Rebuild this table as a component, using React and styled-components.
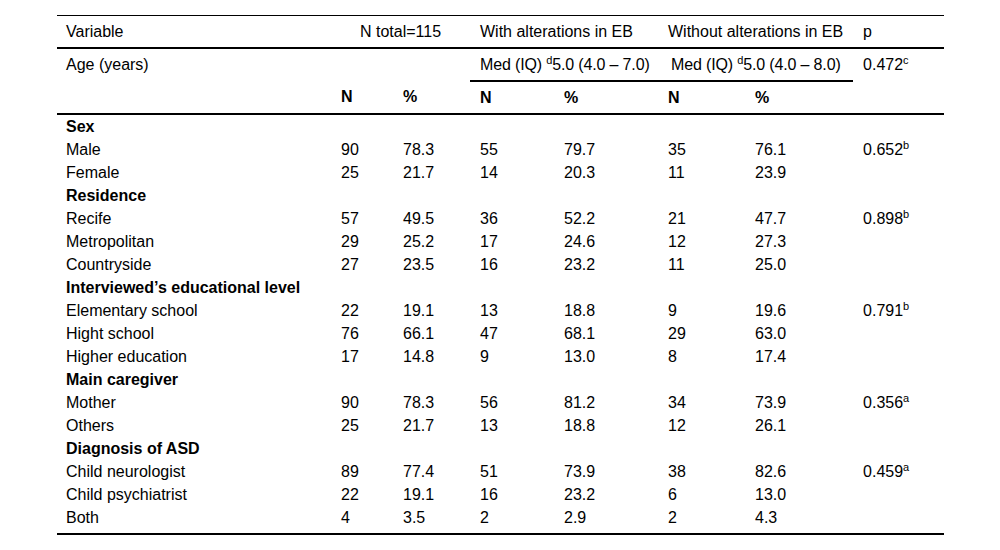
import React from 'react'
import styled, { createGlobalStyle } from 'styled-components'

const GlobalStyle = createGlobalStyle`
  html, body {
    margin: 0;
    padding: 0;
    background: #fff;
  }
  body {
    font-family: "Liberation Sans", Arial, sans-serif;
    color: #000;
  }
`

const Page = styled.div`
  width: 1000px;
  padding: 15px 0 0 57px;
  box-sizing: border-box;
`

const Table = styled.table`
  width: 887px;
  border-collapse: collapse;
  table-layout: fixed;
  font-size: 16px;
  line-height: 17px;
  border-top: 1px solid #000;
  border-bottom: 2px solid #000;
`

const Cell = styled.td`
  padding: ${p => (p.$head ? '7px' : '3px')} 0 ${p => (p.$head ? '7px' : p.$last ? '7px' : '3px')} ${p => p.$pl ?? 10}px;
  text-align: ${p => (p.$center ? 'center' : 'left')};
  font-weight: ${p => (p.$bold ? 'bold' : 'normal')};
  white-space: nowrap;
  vertical-align: top;
  border-bottom: ${p => (p.$rule ? '2px solid #000' : 'none')};
`

const HeadRow = styled.tr`
  border-bottom: ${p => (p.$rule ? '2px solid #000' : 'none')};
`

const Sup = styled.sup`
  font-size: 11px;
  line-height: 0;
  vertical-align: 6px;
`

const MedText = styled.span`
  letter-spacing: -0.15px;
`

const widths = [274, 62, 77, 84, 104, 87, 108, 91]

const groups = [
  {
    title: 'Sex',
    rows: [
      ['Male', '90', '78.3', '55', '79.7', '35', '76.1', '0.652', 'b'],
      ['Female', '25', '21.7', '14', '20.3', '11', '23.9'],
    ],
  },
  {
    title: 'Residence',
    rows: [
      ['Recife', '57', '49.5', '36', '52.2', '21', '47.7', '0.898', 'b'],
      ['Metropolitan', '29', '25.2', '17', '24.6', '12', '27.3'],
      ['Countryside', '27', '23.5', '16', '23.2', '11', '25.0'],
    ],
  },
  {
    title: 'Interviewed\u2019s educational level',
    rows: [
      ['Elementary school', '22', '19.1', '13', '18.8', '9', '19.6', '0.791', 'b'],
      ['Hight school', '76', '66.1', '47', '68.1', '29', '63.0'],
      ['Higher education', '17', '14.8', '9', '13.0', '8', '17.4'],
    ],
  },
  {
    title: 'Main caregiver',
    rows: [
      ['Mother', '90', '78.3', '56', '81.2', '34', '73.9', '0.356', 'a'],
      ['Others', '25', '21.7', '13', '18.8', '12', '26.1'],
    ],
  },
  {
    title: 'Diagnosis of ASD',
    rows: [
      ['Child neurologist', '89', '77.4', '51', '73.9', '38', '82.6', '0.459', 'a'],
      ['Child psychiatrist', '22', '19.1', '16', '23.2', '6', '13.0'],
      ['Both', '4', '3.5', '2', '2.9', '2', '4.3'],
    ],
  },
]

function App() {
  const lastGroup = groups.length - 1
  return (
    <>
      <GlobalStyle />
      <Page>
        <Table>
          <colgroup>
            {widths.map((w, i) => <col key={i} style={{ width: w }} />)}
          </colgroup>
          <thead>
            <HeadRow $rule>
              <Cell as="th" $head $pl={9}>Variable</Cell>
              <Cell as="th" $head colSpan={2} $center $pl={0}>N total=115</Cell>
              <Cell as="th" $head colSpan={2}>With alterations in EB</Cell>
              <Cell as="th" $head colSpan={2}>Without alterations in EB</Cell>
              <Cell as="th" $head>p</Cell>
            </HeadRow>
            <HeadRow>
              <Cell as="th" $head $pl={9}>Age (years)</Cell>
              <Cell as="th" $head colSpan={2}></Cell>
              <Cell as="th" $head colSpan={2} $rule>
                <MedText>Med (IQ) <Sup>d</Sup>5.0 (4.0 – 7.0)</MedText>
              </Cell>
              <Cell as="th" $head colSpan={2} $rule $pl={13}>
                <MedText>Med (IQ) <Sup>d</Sup>5.0 (4.0 – 8.0)</MedText>
              </Cell>
              <Cell as="th" $head>0.472<Sup>c</Sup></Cell>
            </HeadRow>
            <HeadRow $rule>
              <Cell as="th" $head></Cell>
              <Cell as="th" $head $bold>N</Cell>
              <Cell as="th" $head $bold>%</Cell>
              <Cell as="th" $head $bold>N</Cell>
              <Cell as="th" $head $bold>%</Cell>
              <Cell as="th" $head $bold>N</Cell>
              <Cell as="th" $head $bold>%</Cell>
              <Cell as="th" $head></Cell>
            </HeadRow>
          </thead>
          <tbody>
            {groups.map((g, gi) => (
              <React.Fragment key={g.title}>
                <tr>
                  <Cell colSpan={8} $bold $pl={9}>{g.title}</Cell>
                </tr>
                {g.rows.map((r, ri) => {
                  const last = gi === lastGroup && ri === g.rows.length - 1
                  return (
                    <tr key={r[0]}>
                      <Cell $pl={9} $last={last}>{r[0]}</Cell>
                      {r.slice(1, 7).map((v, i) => (
                        <Cell key={i} $last={last}>{v}</Cell>
                      ))}
                      <Cell $last={last}>
                        {r[7]}
                        {r[8] && <Sup>{r[8]}</Sup>}
                      </Cell>
                    </tr>
                  )
                })}
              </React.Fragment>
            ))}
          </tbody>
        </Table>
      </Page>
    </>
  )
}

export default App
